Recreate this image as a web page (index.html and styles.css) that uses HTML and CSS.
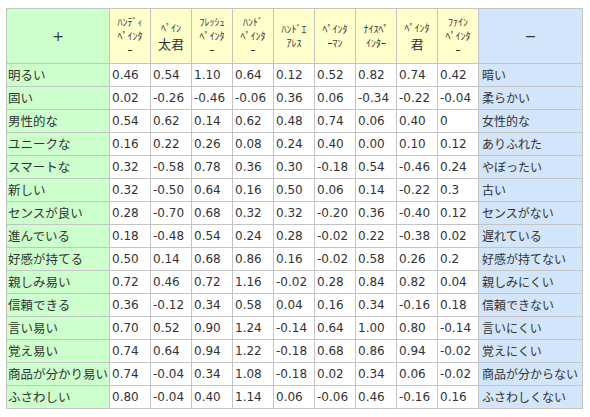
FILE: index.html
```html
<!DOCTYPE html>
<html lang="ja">
<head>
<meta charset="utf-8">
<link rel="stylesheet" href="styles.css">
</head>
<body>
<table class="sd">
  <colgroup>
    <col class="c-label"><col class="c-val"><col class="c-val"><col class="c-val"><col class="c-val"><col class="c-val"><col class="c-val"><col class="c-val"><col class="c-val"><col class="c-val"><col class="c-label2">
  </colgroup>
  <thead>
    <tr>
      <th class="plus">+</th>
      <th class="name"><span class="ln">ﾊﾝﾃﾞｨ</span><span class="ln">ﾍﾟｲﾝﾀ</span><span class="ln">ｰ</span></th>
      <th class="name"><span class="ln">ﾍﾟｲﾝ</span><span class="ln kanji">太君</span></th>
      <th class="name"><span class="ln">ﾌﾚｯｼｭ</span><span class="ln">ﾍﾟｲﾝﾀ</span><span class="ln">ｰ</span></th>
      <th class="name"><span class="ln">ﾊﾝﾄﾞ</span><span class="ln">ﾍﾟｲﾝﾀ</span><span class="ln">ｰ</span></th>
      <th class="name"><span class="ln">ﾊﾝﾄﾞｴ</span><span class="ln">ｱﾚｽ</span></th>
      <th class="name"><span class="ln">ﾍﾟｲﾝﾀ</span><span class="ln">ｰﾏﾝ</span></th>
      <th class="name"><span class="ln">ﾅｲｽﾍﾟ</span><span class="ln">ｲﾝﾀｰ</span></th>
      <th class="name"><span class="ln">ﾍﾟｲﾝﾀ</span><span class="ln kanji">君</span></th>
      <th class="name"><span class="ln">ﾌｧｲﾝ</span><span class="ln">ﾍﾟｲﾝﾀ</span><span class="ln">ｰ</span></th>
      <th class="minus">−</th>
    </tr>
  </thead>
  <tbody>
    <tr><td class="pos">明るい</td><td>0.46</td><td>0.54</td><td>1.10</td><td>0.64</td><td>0.12</td><td>0.52</td><td>0.82</td><td>0.74</td><td>0.42</td><td class="neg">暗い</td></tr>
    <tr><td class="pos">固い</td><td>0.02</td><td>-0.26</td><td>-0.46</td><td>-0.06</td><td>0.36</td><td>0.06</td><td>-0.34</td><td>-0.22</td><td>-0.04</td><td class="neg">柔らかい</td></tr>
    <tr><td class="pos">男性的な</td><td>0.54</td><td>0.62</td><td>0.14</td><td>0.62</td><td>0.48</td><td>0.74</td><td>0.06</td><td>0.40</td><td>0</td><td class="neg">女性的な</td></tr>
    <tr><td class="pos">ユニークな</td><td>0.16</td><td>0.22</td><td>0.26</td><td>0.08</td><td>0.24</td><td>0.40</td><td>0.00</td><td>0.10</td><td>0.12</td><td class="neg">ありふれた</td></tr>
    <tr><td class="pos">スマートな</td><td>0.32</td><td>-0.58</td><td>0.78</td><td>0.36</td><td>0.30</td><td>-0.18</td><td>0.54</td><td>-0.46</td><td>0.24</td><td class="neg">やぼったい</td></tr>
    <tr><td class="pos">新しい</td><td>0.32</td><td>-0.50</td><td>0.64</td><td>0.16</td><td>0.50</td><td>0.06</td><td>0.14</td><td>-0.22</td><td>0.3</td><td class="neg">古い</td></tr>
    <tr><td class="pos">センスが良い</td><td>0.28</td><td>-0.70</td><td>0.68</td><td>0.32</td><td>0.32</td><td>-0.20</td><td>0.36</td><td>-0.40</td><td>0.12</td><td class="neg">センスがない</td></tr>
    <tr><td class="pos">進んでいる</td><td>0.18</td><td>-0.48</td><td>0.54</td><td>0.24</td><td>0.28</td><td>-0.02</td><td>0.22</td><td>-0.38</td><td>0.02</td><td class="neg">遅れている</td></tr>
    <tr><td class="pos">好感が持てる</td><td>0.50</td><td>0.14</td><td>0.68</td><td>0.86</td><td>0.16</td><td>-0.02</td><td>0.58</td><td>0.26</td><td>0.2</td><td class="neg">好感が持てない</td></tr>
    <tr><td class="pos">親しみ易い</td><td>0.72</td><td>0.46</td><td>0.72</td><td>1.16</td><td>-0.02</td><td>0.28</td><td>0.84</td><td>0.82</td><td>0.04</td><td class="neg">親しみにくい</td></tr>
    <tr><td class="pos">信頼できる</td><td>0.36</td><td>-0.12</td><td>0.34</td><td>0.58</td><td>0.04</td><td>0.16</td><td>0.34</td><td>-0.16</td><td>0.18</td><td class="neg">信頼できない</td></tr>
    <tr><td class="pos">言い易い</td><td>0.70</td><td>0.52</td><td>0.90</td><td>1.24</td><td>-0.14</td><td>0.64</td><td>1.00</td><td>0.80</td><td>-0.14</td><td class="neg">言いにくい</td></tr>
    <tr><td class="pos">覚え易い</td><td>0.74</td><td>0.64</td><td>0.94</td><td>1.22</td><td>-0.18</td><td>0.68</td><td>0.86</td><td>0.94</td><td>-0.02</td><td class="neg">覚えにくい</td></tr>
    <tr><td class="pos">商品が分かり易い</td><td>0.74</td><td>-0.04</td><td>0.34</td><td>1.08</td><td>-0.18</td><td>0.02</td><td>0.34</td><td>0.06</td><td>-0.02</td><td class="neg">商品が分からない</td></tr>
    <tr><td class="pos">ふさわしい</td><td>0.80</td><td>-0.04</td><td>0.40</td><td>1.14</td><td>0.06</td><td>-0.06</td><td>0.46</td><td>-0.16</td><td>0.16</td><td class="neg">ふさわしくない</td></tr>
  </tbody>
</table>
</body>
</html>
```
FILE: styles.css
```css
html, body {
  margin: 0;
  padding: 0;
  background: #ffffff;
}

.sd {
  margin: 8px 0 0 6px;
  border-collapse: collapse;
  table-layout: fixed;
  width: 577px;
  color: #333333;
  font-family: "DejaVu Sans", "Noto Sans CJK JP", sans-serif;
  font-size: 12px;
}

.c-label { width: 103px; }
.c-val { width: 41px; }
.c-label2 { width: 104px; }

.sd th,
.sd td {
  border: 1px solid #c4c4c4;
  padding: 0 2px;
  white-space: nowrap;
  overflow: hidden;
}

.sd th {
  height: 54px;
  font-weight: normal;
  text-align: center;
  vertical-align: middle;
}

.sd td {
  height: 22px;
  line-height: 16px;
  text-align: left;
  vertical-align: middle;
  background: #ffffff;
}

.sd th.name {
  background: #ffffcc;
  font-family: "Noto Sans CJK JP", sans-serif;
  font-size: 10px;
  padding: 0 1px;
}

.sd th.name .ln {
  display: block;
  line-height: 14px;
}

.sd th.name .ln.kanji {
  font-size: 13px;
  line-height: 17px;
}

.sd th.plus {
  background: #ccffcc;
  font-size: 14px;
}

.sd th.minus {
  background: #d2e5fb;
  font-size: 14px;
}

.sd td.pos {
  background: #ccffcc;
  font-family: "Noto Sans CJK JP", sans-serif;
  font-size: 12.5px;
  padding-left: 1px;
}

.sd td.neg {
  background: #d2e5fb;
  font-family: "Noto Sans CJK JP", sans-serif;
  font-size: 12px;
  padding-left: 3px;
}
```
